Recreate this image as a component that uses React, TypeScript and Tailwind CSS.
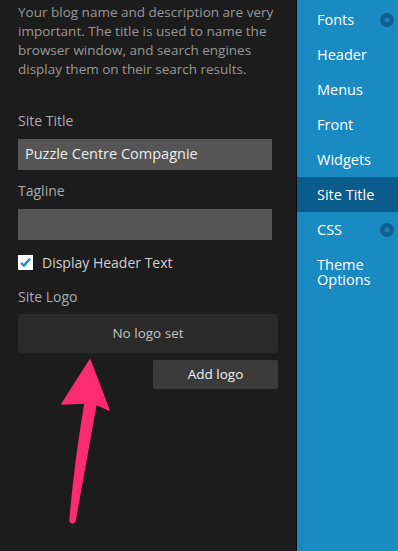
import React from "react";

const menu = [
  { label: "Fonts", dot: true },
  { label: "Header" },
  { label: "Menus" },
  { label: "Front" },
  { label: "Widgets" },
  { label: "Site Title", active: true },
  { label: "CSS", dot: true },
  { label: "Theme Options" },
];

const Dot = () => (
  <svg width="16" height="16" viewBox="0 0 16 16" className="shrink-0">
    <circle cx="8" cy="8" r="7" fill="#0f5f93" />
    <circle cx="8" cy="8" r="2.5" fill="#2a7db3" />
  </svg>
);

const App = () => {
  return (
    <div
      className="relative flex h-[551px] w-[398px] overflow-hidden bg-[#1c1c1c]"
      style={{ fontFamily: '"Open Sans", "Noto Sans", sans-serif' }}
    >
      {/* settings panel */}
      <div className="flex w-[297px] shrink-0 flex-col border-r border-[#0b0b0b] pl-[18px] pr-[19px]">
        <p className="mt-[3px] text-[13.5px] leading-[19px] text-[#989898]">
          Your blog name and description are very important. The title is used to name the browser
          window, and search engines display them on their search results.
        </p>

        <label className="mt-[32px] text-[14px] leading-[19px] text-[#ababab]">Site Title</label>
        <div className="mt-[8.5px] flex h-[31px] w-[254px] items-center bg-[#555555] px-[7px] text-[14.5px] text-[#ededed]">
          Puzzle Centre Compagnie
        </div>

        <label className="mt-[11.5px] text-[14px] leading-[19px] text-[#ababab]">Tagline</label>
        <div className="mt-[8.5px] h-[31px] w-[254px] bg-[#555555]" />

        <div className="mt-[13.5px] flex h-[19px] items-center gap-[9px]">
          <span className="flex h-[15px] w-[15px] items-center justify-center bg-white">
            <svg width="13" height="13" viewBox="0 0 13 13">
              <path d="M2 6.8 L5 9.6 L11 2.8" fill="none" stroke="#1e8cbe" strokeWidth="2.4" />
            </svg>
          </span>
          <span className="text-[14px] text-[#cfcfcf]">Display Header Text</span>
        </div>

        <label className="mt-[15px] text-[14px] leading-[19px] text-[#ababab]">Site Logo</label>
        <div className="mt-[7.5px] flex h-[39px] w-[260px] items-center justify-center rounded-[2px] bg-[#2a2a2a] text-[13.5px] text-[#c4c4c4]">
          No logo set
        </div>
        <div className="mt-[7px] flex w-[260px] justify-end">
          <button className="h-[29px] w-[125px] rounded-[2px] bg-[#3b3b3b] text-[13.5px] text-[#f2f2f2]">
            Add logo
          </button>
        </div>
      </div>

      {/* sidebar menu */}
      <nav className="flex flex-1 flex-col bg-[#1a8ac2] pt-[2px]">
        {menu.map((m) =>
          m.label === "Theme Options" ? (
            <div key={m.label} className="pl-[20px] pt-[10px] text-[14.5px] leading-[15px] text-white">
              <span className="block w-[60px]">{m.label}</span>
            </div>
          ) : (
            <div
              key={m.label}
              className={
                "flex h-[35px] items-center justify-between pl-[20px] pr-[3px] text-[14.5px] leading-[15px] text-white " +
                (m.active ? "bg-[#0b5b8d]" : "")
              }
            >
              <span>{m.label}</span>
              {m.dot && <Dot />}
            </div>
          )
        )}
      </nav>

      {/* annotation arrow */}
      <svg
        className="pointer-events-none absolute left-0 top-0"
        width="398"
        height="551"
        viewBox="0 0 398 551"
      >
        <path
          d="M90 360 L109 410 L96 404 Q84 470 75 521 Q72 525 70 521 Q74 470 85 403 L62 404 Z"
          fill="#fd2b72"
          stroke="#fd2b72"
          strokeWidth="1.5"
          strokeLinejoin="round"
        />
      </svg>
    </div>
  );
};

export default App;
